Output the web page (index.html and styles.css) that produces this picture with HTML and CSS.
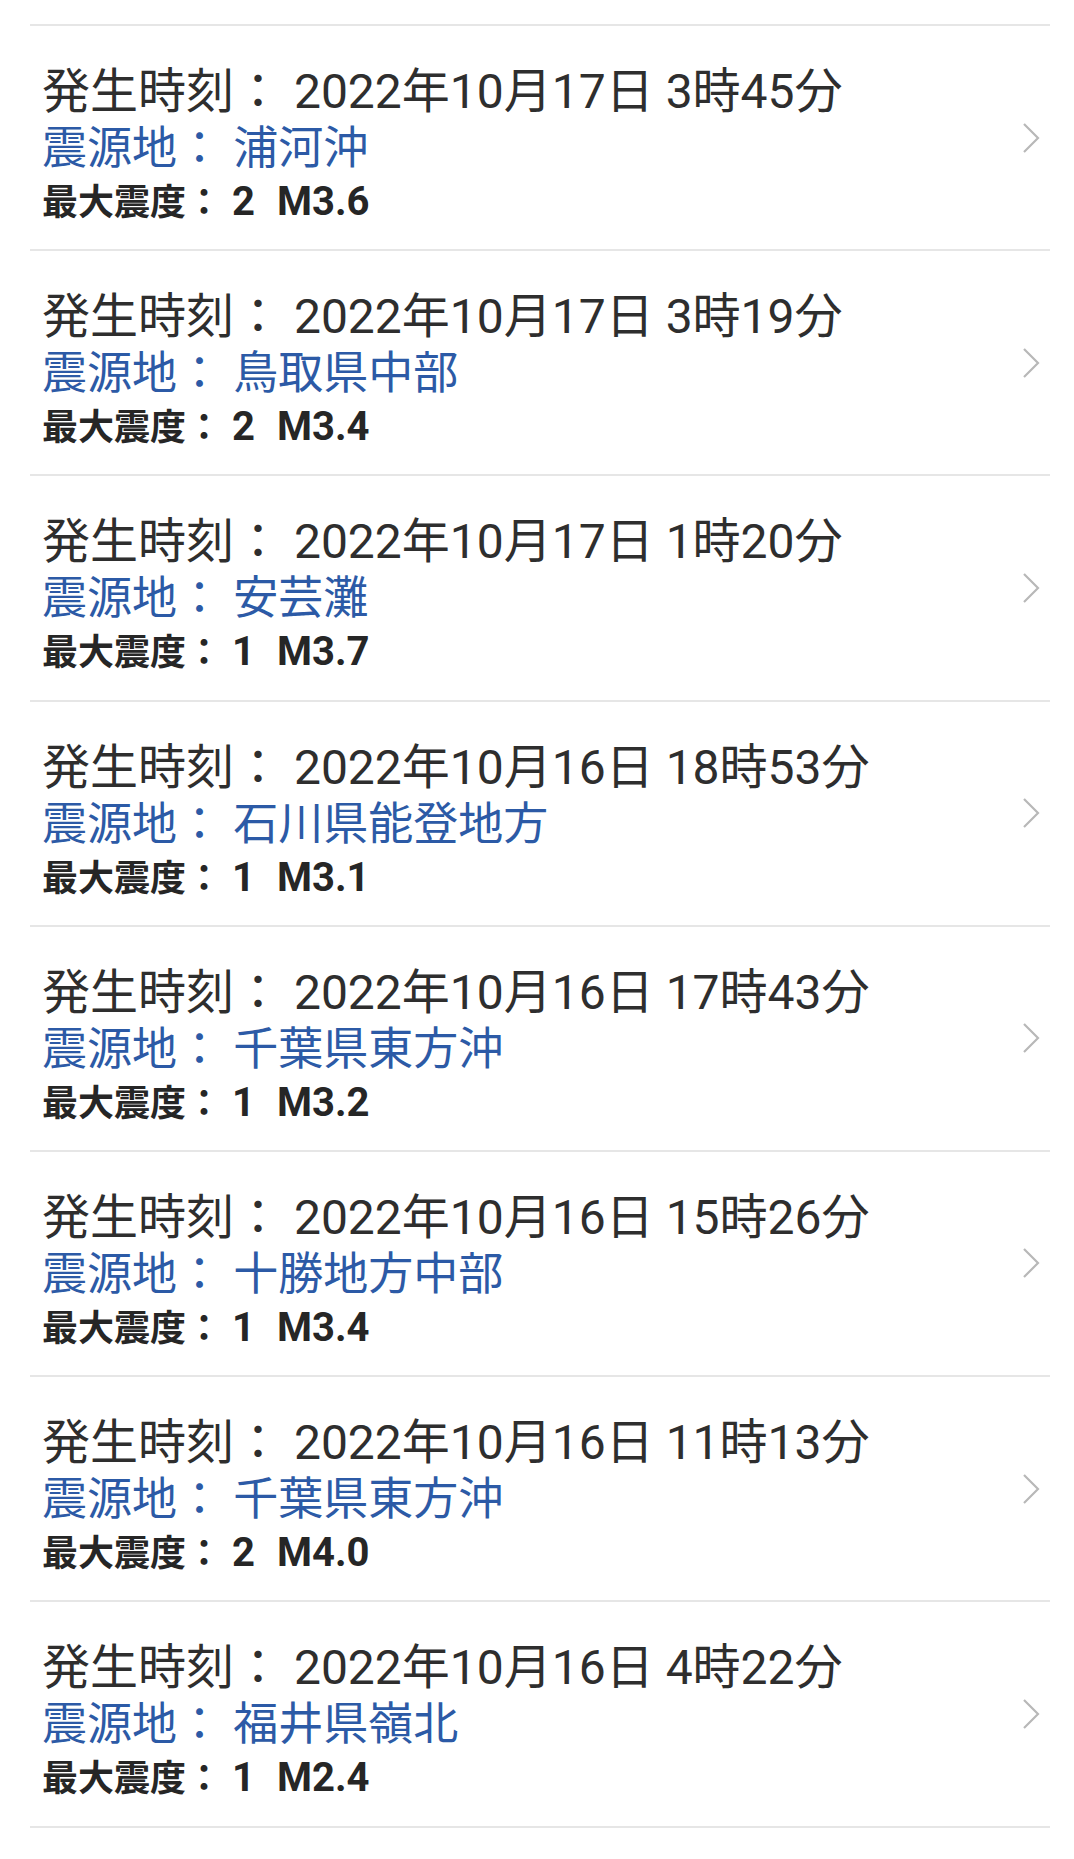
FILE: index.html
```html
<!DOCTYPE html>
<html lang="ja">
<head>
<meta charset="utf-8">
<title>地震情報</title>
<link rel="stylesheet" href="styles.css">
</head>
<body>
<ul class="list">
  <li class="item">
    <div class="info">
      <div class="time">発生時刻： 2022年10月17日 3時45分</div>
      <div class="place">震源地： 浦河沖</div>
      <div class="scale">最大震度：<span class="num"> 2<span class="mag">M3.6</span></span></div>
    </div>
    <svg class="chev" viewBox="0 0 18 32"><path d="M2 2 L16 16 L2 30"/></svg>
  </li>
  <li class="item">
    <div class="info">
      <div class="time">発生時刻： 2022年10月17日 3時19分</div>
      <div class="place">震源地： 鳥取県中部</div>
      <div class="scale">最大震度：<span class="num"> 2<span class="mag">M3.4</span></span></div>
    </div>
    <svg class="chev" viewBox="0 0 18 32"><path d="M2 2 L16 16 L2 30"/></svg>
  </li>
  <li class="item">
    <div class="info">
      <div class="time">発生時刻： 2022年10月17日 1時20分</div>
      <div class="place">震源地： 安芸灘</div>
      <div class="scale">最大震度：<span class="num"> 1<span class="mag">M3.7</span></span></div>
    </div>
    <svg class="chev" viewBox="0 0 18 32"><path d="M2 2 L16 16 L2 30"/></svg>
  </li>
  <li class="item">
    <div class="info">
      <div class="time">発生時刻： 2022年10月16日 18時53分</div>
      <div class="place">震源地： 石川県能登地方</div>
      <div class="scale">最大震度：<span class="num"> 1<span class="mag">M3.1</span></span></div>
    </div>
    <svg class="chev" viewBox="0 0 18 32"><path d="M2 2 L16 16 L2 30"/></svg>
  </li>
  <li class="item">
    <div class="info">
      <div class="time">発生時刻： 2022年10月16日 17時43分</div>
      <div class="place">震源地： 千葉県東方沖</div>
      <div class="scale">最大震度：<span class="num"> 1<span class="mag">M3.2</span></span></div>
    </div>
    <svg class="chev" viewBox="0 0 18 32"><path d="M2 2 L16 16 L2 30"/></svg>
  </li>
  <li class="item">
    <div class="info">
      <div class="time">発生時刻： 2022年10月16日 15時26分</div>
      <div class="place">震源地： 十勝地方中部</div>
      <div class="scale">最大震度：<span class="num"> 1<span class="mag">M3.4</span></span></div>
    </div>
    <svg class="chev" viewBox="0 0 18 32"><path d="M2 2 L16 16 L2 30"/></svg>
  </li>
  <li class="item">
    <div class="info">
      <div class="time">発生時刻： 2022年10月16日 11時13分</div>
      <div class="place">震源地： 千葉県東方沖</div>
      <div class="scale">最大震度：<span class="num"> 2<span class="mag">M4.0</span></span></div>
    </div>
    <svg class="chev" viewBox="0 0 18 32"><path d="M2 2 L16 16 L2 30"/></svg>
  </li>
  <li class="item">
    <div class="info">
      <div class="time">発生時刻： 2022年10月16日 4時22分</div>
      <div class="place">震源地： 福井県嶺北</div>
      <div class="scale">最大震度：<span class="num"> 1<span class="mag">M2.4</span></span></div>
    </div>
    <svg class="chev" viewBox="0 0 18 32"><path d="M2 2 L16 16 L2 30"/></svg>
  </li>
</ul>
</body>
</html>
```
FILE: styles.css
```css
html, body {
  margin: 0;
  padding: 0;
  background: #ffffff;
}
body {
  font-family: Roboto, "Noto Sans CJK JP", sans-serif;
}
.list {
  list-style: none;
  margin: 0 24px 0 30px;
  padding: 24px 0 0 0;
}
.item {
  display: flex;
  align-items: center;
  border-top: 2px solid #e6e6e6;
  padding: 38px 10px 21.2px 12px;
}
.item:last-child {
  border-bottom: 2px solid #e6e6e6;
}
.info {
  flex: 1;
  min-width: 0;
}
.time {
  font-size: 48px;
  line-height: 56px;
  height: 56px;
  color: #2e2e2e;
  white-space: nowrap;
}
.place {
  font-size: 45px;
  line-height: 58px;
  height: 58px;
  color: #2c5aa6;
  white-space: nowrap;
}
.scale {
  font-size: 36px;
  line-height: 50px;
  height: 50px;
  font-weight: bold;
  color: #262626;
  white-space: nowrap;
}
.num {
  font-size: 40px;
  line-height: 36px;
}
.mag {
  margin-left: 22px;
}
.chev {
  width: 18px;
  height: 32px;
  flex: none;
  margin-bottom: 17px;
  fill: none;
  stroke: #b8b8b8;
  stroke-width: 2.2;
}
```
